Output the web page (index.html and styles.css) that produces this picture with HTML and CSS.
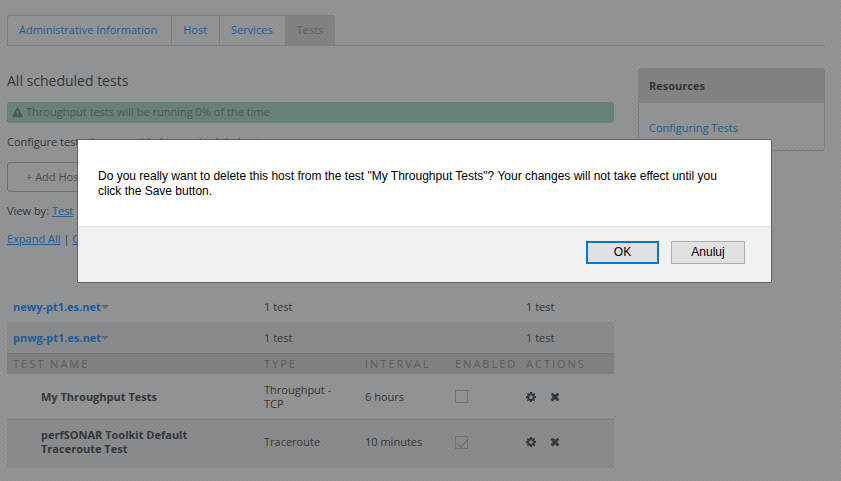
FILE: index.html
```html
<!DOCTYPE html>
<html lang="en">
<head>
<meta charset="utf-8">
<title>Tests</title>
<link rel="stylesheet" href="styles.css">
</head>
<body>
<svg class="sprite" aria-hidden="true">
  <symbol id="gear" viewBox="0 0 16 16"><path fill-rule="evenodd" d="M6.500 0h3l.4 2.200 1.300.6L13 1.500 14.600 3.100 13.300 4.900l.5 1.300 2.200.3v3l-2.200.4-.5 1.300 1.300 1.700-1.600 1.700-1.800-1.300-1.300.6L9.500 16h-3l-.4-2.200-1.300-.5L3 14.600 1.400 13l1.300-1.800-.6-1.300L0 9.500v-3l2.100-.4.6-1.300L1.400 3 3 1.400l1.800 1.300 1.300-.5zM8 5a3 3 0 1 0 0 6 3 3 0 0 0 0-6z"/></symbol>
  <symbol id="cross" viewBox="0 0 16 16"><path d="M4 1l4 3.500L12 1l3 3-3.500 4 3.500 4-3 3-4-3.500L4 15l-3-3 3.500-4L1 4z"/></symbol>
  <symbol id="warning" viewBox="0 0 16 16"><path fill-rule="evenodd" d="M7 1.500Q8 0 9 1.500L15.600 13.500Q16 15 14.500 15H1.500Q0 15 .4 13.500zM6.700 5.500l.4 4.500h1.800l.4-4.500zM7 11.200v2h2v-2z"/></symbol>
</svg>
<div class="page">
  <nav class="tabs">
    <a class="tab" href="#">Administrative Information</a>
    <a class="tab" href="#">Host</a>
    <a class="tab" href="#">Services</a>
    <a class="tab current" href="#">Tests</a>
  </nav>
  <div class="columns">
    <main class="main">
      <h1>All scheduled tests</h1>
      <p class="notice"><svg class="icon"><use href="#warning"/></svg>Throughput tests will be running 0% of the time</p>
      <p class="intro">Configure tests that are added to a scheduled set.</p>
      <button class="add" type="button">+ Add Host</button>
      <p class="view">View by: <a href="#">Test</a></p>
      <p class="expand"><a href="#">Expand All</a> | <a href="#">Collapse All</a></p>
      <table class="tests">
        <colgroup><col class="c-name"><col class="c-type"><col class="c-interval"><col class="c-enabled"><col class="c-actions"></colgroup>
        <tbody>
          <tr class="host"><td><a href="#">newy-pt1.es.net</a><span class="caret"></span></td><td colspan="3">1 test</td><td>1 test</td></tr>
          <tr class="host shaded"><td><a href="#">pnwg-pt1.es.net</a><span class="caret"></span></td><td colspan="3">1 test</td><td>1 test</td></tr>
          <tr class="head"><th>Test name</th><th>Type</th><th>Interval</th><th>Enabled</th><th>Actions</th></tr>
          <tr class="test"><td class="name">My Throughput Tests</td><td>Throughput - TCP</td><td>6 hours</td><td><input type="checkbox" aria-label="Enable My Throughput Tests"></td><td><div class="actions"><button type="button" aria-label="Configure"><svg class="icon"><use href="#gear"/></svg></button><button type="button" aria-label="Delete"><svg class="icon"><use href="#cross"/></svg></button></div></td></tr>
          <tr class="test tall shaded"><td class="name">perfSONAR Toolkit Default Traceroute Test</td><td>Traceroute</td><td>10 minutes</td><td><input type="checkbox" checked aria-label="Enable Traceroute Test"></td><td><div class="actions"><button type="button" aria-label="Configure"><svg class="icon"><use href="#gear"/></svg></button><button type="button" aria-label="Delete"><svg class="icon"><use href="#cross"/></svg></button></div></td></tr>
        </tbody>
      </table>
    </main>
    <aside class="resources">
      <h2>Resources</h2>
      <div class="links"><a href="#">Configuring Tests</a></div>
    </aside>
  </div>
</div>
<div class="overlay">
  <div class="dialog" role="dialog" aria-modal="true" aria-describedby="message">
    <p id="message">Do you really want to delete this host from the test "My Throughput Tests"? Your changes will not take effect until you click the Save button.</p>
    <div class="buttons"><button class="ok" type="button">OK</button><button type="button">Anuluj</button></div>
  </div>
</div>
</body>
</html>
```
FILE: styles.css
```css
* { box-sizing: border-box; }
body {
  margin: 0;
  background: #939495;
  color: #333639;
  font: 11px/14px "Open Sans", sans-serif;
}
h1, h2, p { margin: 0; }
a { color: #205c9c; }
button { font: inherit; color: inherit; cursor: pointer; }
.sprite { display: none; }
.icon { width: 10px; height: 10px; fill: currentColor; display: block; }
.page { padding: 15px 16px 12px 7px; }
.tabs { display: flex; border-bottom: 1px solid #808182; }
.tab {
  padding: 7px 12px 8px 11px;
  border: 1px solid #808182;
  border-width: 1px 0 0 1px;
  text-decoration: none;
}
.tab:first-child { padding-right: 14px; border-top-left-radius: 3px; }
.tab.current { background: #828384; color: #606263; border-top-right-radius: 3px; }
.columns { display: flex; align-items: flex-start; gap: 24px; padding-top: 22px; }
.main { flex: 1; min-width: 0; }
h1 { padding-top: 1px; font-size: 14px; font-weight: 400; line-height: 24px; }
.notice {
  display: flex;
  align-items: center;
  gap: 3px;
  margin-top: 9px;
  padding: 3px 5px 4px;
  border-radius: 3px;
  background: #6a8378;
  color: #4a5953;
}
.notice .icon { width: 11px; height: 11px; }
.intro { margin-top: 12px; }
.add {
  display: block;
  margin-top: 13px;
  padding: 7px 18px;
  border: 1px solid #6c6e6f;
  border-radius: 3px;
  background: none;
  color: #4b4e50;
}
.view { margin-top: 12px; }
.expand { margin-top: 14px; }
.tests {
  width: 100%;
  margin-top: 44px;
  border-collapse: collapse;
  table-layout: fixed;
}
.c-type { width: 101px; }
.c-interval { width: 90px; }
.c-enabled { width: 71px; }
.c-actions { width: 94px; }
.tests td, .tests th { padding: 0 0 0 6px; text-align: left; vertical-align: middle; }
.tests td { padding-top: 1px; }
.host { height: 32px; }
.host.shaded { height: 31px; }
.host a { font-weight: 700; text-decoration: none; }
.caret {
  display: inline-block;
  border: 4px solid transparent;
  border-top-color: #656769;
  border-bottom: 0;
  vertical-align: 2px;
}
.shaded { background: #8b8c8d; }
.head { height: 21px; background: #818283; border-top: 1px solid #777879; }
.head th { font-weight: 400; letter-spacing: 2px; text-transform: uppercase; color: #5c5e60; }
.test { height: 45px; }
.test + .test { border-top: 1px solid #7d7e7f; }
.test.tall { height: 49px; }
.tests .name { padding: 1px 50px 0 34px; font-weight: 700; }
.tests td:nth-child(2) { padding-right: 20px; }
.tests .tall td { padding-bottom: 4px; }
input {
  appearance: none;
  display: block;
  width: 13px;
  height: 13px;
  margin: 0;
  border: 1px solid #737576;
}
input:checked::before {
  content: "";
  display: block;
  width: 9px;
  height: 5px;
  margin: 2px 1px;
  border: solid #686a6b;
  border-width: 0 0 1px 1px;
  transform: rotate(-48deg);
}
.actions { display: flex; gap: 14px; color: #33383c; }
.actions button { padding: 0; border: 0; background: none; }
.resources { width: 187px; border: 1px solid #808182; border-radius: 3px; }
h2 { padding: 10px; font-size: 11px; line-height: 14px; background: #828384; }
.links { padding: 18px 10px 15px; }
.links a { text-decoration: none; }
/* Fine diamond weave laid over the dimmed page */
.overlay {
  position: fixed;
  inset: 0;
  display: flex;
  flex-direction: column;
  align-items: center;
  padding: 139px 69px 0 77px;
  background-image: conic-gradient(rgba(70, 85, 95, 0.06) 25%, transparent 0 50%, rgba(70, 85, 95, 0.06) 0 75%, transparent 0);
  background-size: 4px 4px;
}
.dialog {
  width: 100%;
  max-width: 695px;
  border: 1px solid #5f6162;
  border-radius: 2px;
  background: #fff;
  color: #000;
  font: 12px/15px "Liberation Sans", sans-serif;
}
#message { padding: 29px 40px 27px 20px; }
.buttons {
  display: flex;
  justify-content: flex-end;
  gap: 12px;
  padding: 14px 26px 18px;
  border-top: 1px solid #e3e3e3;
  background: #f1f1f1;
}
.buttons button { width: 74px; height: 23px; padding: 0; border: 1px solid #adadad; background: #e1e1e1; }
.buttons .ok { width: 73px; border: 2px solid #0078d7; }
```
